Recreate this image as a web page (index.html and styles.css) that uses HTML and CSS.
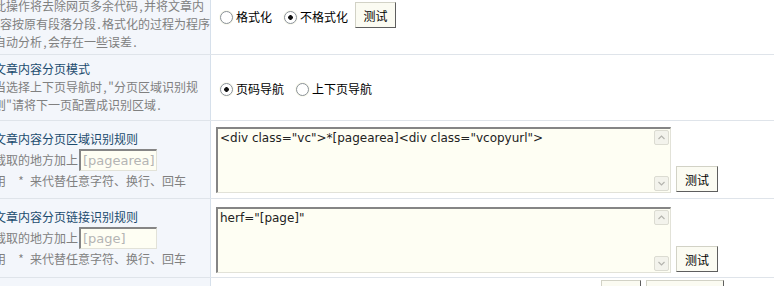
FILE: index.html
```html
<!DOCTYPE html>
<html lang="zh-CN">
<head>
    <meta charset="UTF-8">
    <title>分页采集设置</title>
    <link rel="stylesheet" href="styles.css">
</head>
<body>
<div class="page">
    <div class="row row-top">
        <div class="label">
            <p class="tip">此操作将去除网页多余代码,并将文章内<br>&nbsp;容按原有段落分段.格式化的过程为程序<br>自动分析,会存在一些误差.</p>
        </div>
        <div class="field field-top">
            <label class="opt"><input type="radio" name="format">格式化</label>
            <label class="opt"><input type="radio" name="format" checked>不格式化</label>
            <button type="button" class="btn btn-small">测试</button>
        </div>
    </div>

    <div class="row row-mode">
        <div class="label">
            <p class="title">文章内容分页模式</p>
            <p class="tip">当选择上下页导航时,"分页区域识别规<br>则"请将下一页配置成识别区域.</p>
        </div>
        <div class="field field-mode">
            <label class="opt"><input type="radio" name="pagemode" checked>页码导航</label>
            <label class="opt"><input type="radio" name="pagemode">上下页导航</label>
        </div>
    </div>

    <div class="row row-area">
        <div class="label">
            <p class="title">文章内容分页区域识别规则</p>
            <p class="tip tip-input">截取的地方加上<input class="inp" type="text" value="[pagearea]" readonly></p>
            <p class="tip">用 &nbsp;* 来代替任意字符、换行、回车</p>
        </div>
        <div class="field field-area">
            <div class="ta">
                <textarea>&lt;div class="vc"&gt;*[pagearea]&lt;div class="vcopyurl"&gt;</textarea>
                <div class="sb">
                    <span><svg width="7" height="5" viewBox="0 0 7 5"><polyline points="0.5,4 3.5,1 6.5,4" fill="none" stroke="#b4b4ae" stroke-width="1.2"/></svg></span>
                    <span><svg width="7" height="5" viewBox="0 0 7 5"><polyline points="0.5,1 3.5,4 6.5,1" fill="none" stroke="#b4b4ae" stroke-width="1.2"/></svg></span>
                </div>
            </div>
            <button type="button" class="btn">测试</button>
        </div>
    </div>

    <div class="row row-link">
        <div class="label">
            <p class="title">文章内容分页链接识别规则</p>
            <p class="tip tip-input">截取的地方加上<input class="inp" type="text" value="[page]" readonly></p>
            <p class="tip">用 &nbsp;* 来代替任意字符、换行、回车</p>
        </div>
        <div class="field field-area field-link">
            <div class="ta">
                <textarea>herf="[page]"</textarea>
                <div class="sb">
                    <span><svg width="7" height="5" viewBox="0 0 7 5"><polyline points="0.5,4 3.5,1 6.5,4" fill="none" stroke="#b4b4ae" stroke-width="1.2"/></svg></span>
                    <span><svg width="7" height="5" viewBox="0 0 7 5"><polyline points="0.5,1 3.5,4 6.5,1" fill="none" stroke="#b4b4ae" stroke-width="1.2"/></svg></span>
                </div>
            </div>
            <button type="button" class="btn">测试</button>
        </div>
    </div>

    <div class="row row-foot">
        <div class="label"></div>
        <div class="field field-foot">
            <button type="button" class="btn btn-foot">返回</button>
            <button type="button" class="btn btn-foot-wide">保存设置</button>
        </div>
    </div>
</div>
</body>
</html>
```

FILE: styles.css
```css
body {
    margin: 0;
    background: #fff;
    color: #000;
    font-family: "Noto Sans Mono CJK SC", "Noto Sans CJK SC", sans-serif;
    font-size: 12px;
    overflow: hidden;
}
p {
    margin: 0;
}
.page {
    width: 780px;
    margin: -7px 0 0 -6px;
}
.row {
    display: flex;
    border-bottom: 1px solid #dfe4ea;
}
.label {
    width: 216px;
    flex: none;
    display: flex;
    flex-direction: column;
    justify-content: center;
    padding: 5px 0 6px;
    background: #f3f6fb;
    border-right: 1px solid #d6e0eb;
    line-height: 18px;
    white-space: nowrap;
}
.title {
    color: #1b4b6e;
}
.tip {
    color: #808080;
}
.tip-input {
    display: flex;
    align-items: center;
    height: 24px;
}
.inp {
    width: 78px;
    height: 22px;
    box-sizing: border-box;
    margin: 0 0 0 1px;
    padding: 0 2px;
    border-style: solid;
    border-width: 2px 1px 1px 2px;
    border-color: #858585 #e2e2d8 #e2e2d8 #858585;
    background: #fefef3;
    color: #b4b4b4;
    font: 13px "DejaVu Sans", sans-serif;
    outline: none;
}
.field {
    flex: 1;
    display: flex;
    align-items: center;
    padding-left: 9px;
}
.row-top .label {
    padding: 4px 0 3px;
}
.field-top {
    align-items: flex-start;
    padding-top: 8px;
}
.field-top .opt {
    margin-top: 7px;
}
.field-mode {
    padding-top: 3px;
}
.opt {
    display: inline-flex;
    align-items: center;
    gap: 3px;
    line-height: 18px;
}
.opt + .opt {
    margin-left: 12px;
}
.opt input {
    -webkit-appearance: none;
    appearance: none;
    width: 13px;
    height: 13px;
    box-sizing: border-box;
    margin: 0;
    border: 1px solid #8a9198;
    border-radius: 50%;
    background: #fff;
    box-shadow: 0 0 0 1px #fbfbef;
}
.opt input:checked {
    background: radial-gradient(circle, #111 0 2px, #fff 2.6px);
}
.btn {
    width: 42px;
    height: 26px;
    padding: 0;
    border: 1px solid;
    border-color: #d2d2c6 #5e5e5e #5e5e5e #d2d2c6;
    background: #fbfbf2;
    color: #000;
    font-family: inherit;
    font-size: 12px;
}
.btn-small {
    width: 41px;
    margin-left: 7px;
    margin-top: 1px;
}
.row-area .label {
    padding: 0;
}
.field-area {
    align-items: flex-end;
    gap: 5px;
    padding: 6px 0 5px 5px;
}
.field-link {
    padding: 8px 0 4px 5px;
}
.field-area .btn {
    margin-bottom: 1px;
}
.ta {
    display: flex;
    width: 455px;
    height: 66px;
    box-sizing: border-box;
    border-style: solid;
    border-width: 2px 1px 1px 2px;
    border-color: #858585 #e2e2d8 #e2e2d8 #858585;
    background: #fefef3;
}
.ta textarea {
    flex: 1;
    margin: 0;
    padding: 2px 2px;
    border: 0;
    background: transparent;
    color: #222;
    font: 12px/15px "DejaVu Sans", sans-serif;
    resize: none;
    outline: none;
    overflow: hidden;
}
.sb {
    width: 16px;
    display: flex;
    flex-direction: column;
    justify-content: space-between;
    padding: 1px 1px 1px 0;
    box-sizing: border-box;
}
.sb span {
    height: 15px;
    display: flex;
    align-items: center;
    justify-content: center;
    box-sizing: border-box;
    border: 1px solid #dcdcd2;
    border-radius: 2px;
    background: #f3f3ec;
}
.row-foot .label {
    height: 30px;
    padding: 0;
}
.field-foot {
    align-items: flex-start;
    justify-content: flex-end;
    gap: 5px;
    padding: 2px 50px 0 0;
}
.btn-foot {
    width: 40px;
}
.btn-foot-wide {
    width: 78px;
}
```
